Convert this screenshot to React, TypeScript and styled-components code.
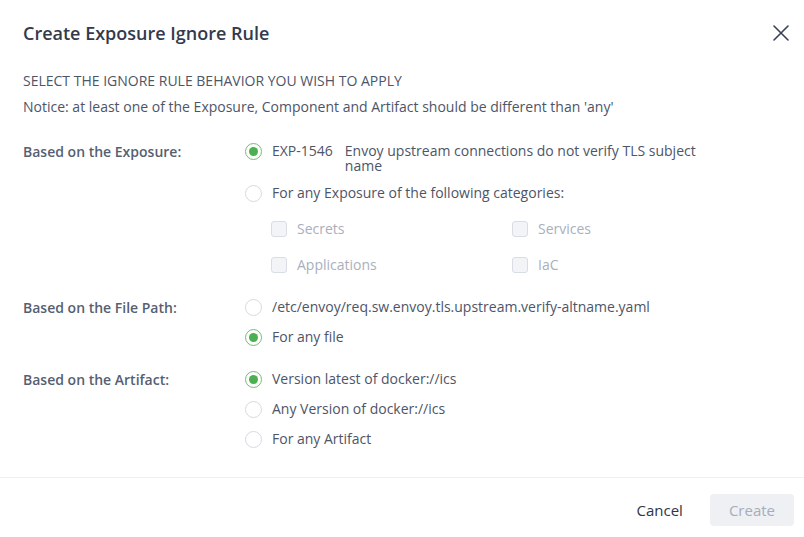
import React from "react";
import styled, { createGlobalStyle } from "styled-components";

const Global = createGlobalStyle`
  html, body { margin: 0; padding: 0; background: #ffffff; }
  body { font-family: "Open Sans", "Noto Sans", sans-serif; -webkit-font-smoothing: antialiased; }
  * { box-sizing: border-box; }
`;

const Dialog = styled.div`
  width: 804px;
  height: 537px;
  background: #fff;
  display: flex;
  flex-direction: column;
`;

const Header = styled.div`
  display: flex;
  align-items: center;
  justify-content: space-between;
  padding: 21px 13px 0 23px;
`;

const Title = styled.h1`
  margin: 0;
  font-size: 18px;
  line-height: 24px;
  font-weight: 600;
  color: #333a4c;
`;

const CloseButton = styled.button`
  border: 0;
  background: transparent;
  padding: 2px;
  width: 20px;
  height: 20px;
  display: flex;
  align-items: center;
  justify-content: center;
  cursor: pointer;
  color: #3b4152;
`;

const Body = styled.div`
  padding: 26px 23px 28px;
  display: flex;
  flex-direction: column;
`;

const Instruction = styled.div<{ upper?: boolean }>`
  font-size: 14px;
  line-height: 20px;
  color: #4d5568;
  text-transform: ${(p) => (p.upper ? "uppercase" : "none")};
  margin-top: ${(p) => (p.upper ? "0" : "6px")};
`;

const Sections = styled.div`
  margin-top: 24px;
  display: flex;
  flex-direction: column;
  gap: 22px;
`;

const Section = styled.div`
  display: flex;
  align-items: flex-start;
`;

const Label = styled.div`
  width: 222px;
  flex: none;
  font-size: 14px;
  line-height: 20px;
  font-weight: 600;
  color: #565f72;
  padding-top: 1px;
`;

const Options = styled.div`
  display: flex;
  flex-direction: column;
  gap: 10px;
`;

const Option = styled.label`
  display: flex;
  align-items: flex-start;
  gap: 10px;
  font-size: 14px;
  line-height: 20px;
  color: #4d5568;
  cursor: pointer;
`;

const Radio = styled.span<{ checked?: boolean }>`
  flex: none;
  width: 17px;
  height: 17px;
  margin-top: 1.5px;
  border-radius: 50%;
  border: 1px solid ${(p) => (p.checked ? "#6cc46c" : "#d6dae4")};
  background: #fff;
  display: flex;
  align-items: center;
  justify-content: center;
  &::after {
    content: "";
    width: 9px;
    height: 9px;
    border-radius: 50%;
    background: ${(p) => (p.checked ? "#4caf50" : "transparent")};
  }
`;

const ExpRow = styled.span`
  display: flex;
  gap: 12px;
`;

const ExpId = styled.span`
  flex: none;
`;

const ExpDesc = styled.span`
  width: 360px;
  line-height: 15px;
  padding-top: 2px;
`;

const CategoryGrid = styled.div`
  margin-top: 16px;
  padding-left: 26px;
  display: grid;
  grid-template-columns: 241px 200px;
  row-gap: 16px;
`;

const CheckItem = styled.label`
  display: flex;
  align-items: center;
  gap: 10px;
  font-size: 14px;
  line-height: 20px;
  color: #a9afbc;
`;

const CheckBox = styled.span`
  width: 16px;
  height: 16px;
  border-radius: 3px;
  border: 1px solid #d9dde6;
  background: #f2f4f8;
  flex: none;
`;

const Divider = styled.div`
  height: 1px;
  background: #eff0f3;
`;

const Footer = styled.div`
  display: flex;
  justify-content: flex-end;
  align-items: center;
  gap: 11px;
  padding: 16px 10px 0;
`;

const Button = styled.button<{ primary?: boolean }>`
  height: 32px;
  border: 0;
  border-radius: 4px;
  font-family: "Open Sans", "Noto Sans", sans-serif;
  font-size: 15px;
  font-weight: 500;
  padding: 0 ${(p) => (p.primary ? "19px" : "16px")};
  background: ${(p) => (p.primary ? "#eef0f4" : "transparent")};
  color: ${(p) => (p.primary ? "#a7adb9" : "#2f3547")};
  cursor: ${(p) => (p.primary ? "default" : "pointer")};
`;

const CloseIcon = () => (
  <svg width="16" height="16" viewBox="0 0 16 16" fill="none">
    <path d="M1 1L15 15M15 1L1 15" stroke="currentColor" strokeWidth="1.6" strokeLinecap="round" />
  </svg>
);

export default function App() {
  return (
    <>
      <Global />
      <Dialog>
        <Header>
          <Title>Create Exposure Ignore Rule</Title>
          <CloseButton aria-label="Close">
            <CloseIcon />
          </CloseButton>
        </Header>
        <Body>
          <Instruction upper>Select the ignore rule behavior you wish to apply</Instruction>
          <Instruction>Notice: at least one of the Exposure, Component and Artifact should be different than 'any'</Instruction>
          <Sections>
            <Section>
              <Label>Based on the Exposure:</Label>
              <Options>
                <Option>
                  <Radio checked />
                  <ExpRow>
                    <ExpId>EXP-1546</ExpId>
                    <ExpDesc>Envoy upstream connections do not verify TLS subject name</ExpDesc>
                  </ExpRow>
                </Option>
                <div>
                  <Option>
                    <Radio />
                    <span>For any Exposure of the following categories:</span>
                  </Option>
                  <CategoryGrid>
                    <CheckItem><CheckBox />Secrets</CheckItem>
                    <CheckItem><CheckBox />Services</CheckItem>
                    <CheckItem><CheckBox />Applications</CheckItem>
                    <CheckItem><CheckBox />IaC</CheckItem>
                  </CategoryGrid>
                </div>
              </Options>
            </Section>
            <Section>
              <Label>Based on the File Path:</Label>
              <Options>
                <Option>
                  <Radio />
                  <span>/etc/envoy/req.sw.envoy.tls.upstream.verify-altname.yaml</span>
                </Option>
                <Option>
                  <Radio checked />
                  <span>For any file</span>
                </Option>
              </Options>
            </Section>
            <Section>
              <Label>Based on the Artifact:</Label>
              <Options>
                <Option>
                  <Radio checked />
                  <span>Version latest of docker://ics</span>
                </Option>
                <Option>
                  <Radio />
                  <span>Any Version of docker://ics</span>
                </Option>
                <Option>
                  <Radio />
                  <span>For any Artifact</span>
                </Option>
              </Options>
            </Section>
          </Sections>
        </Body>
        <Divider />
        <Footer>
          <Button>Cancel</Button>
          <Button primary>Create</Button>
        </Footer>
      </Dialog>
    </>
  );
}
